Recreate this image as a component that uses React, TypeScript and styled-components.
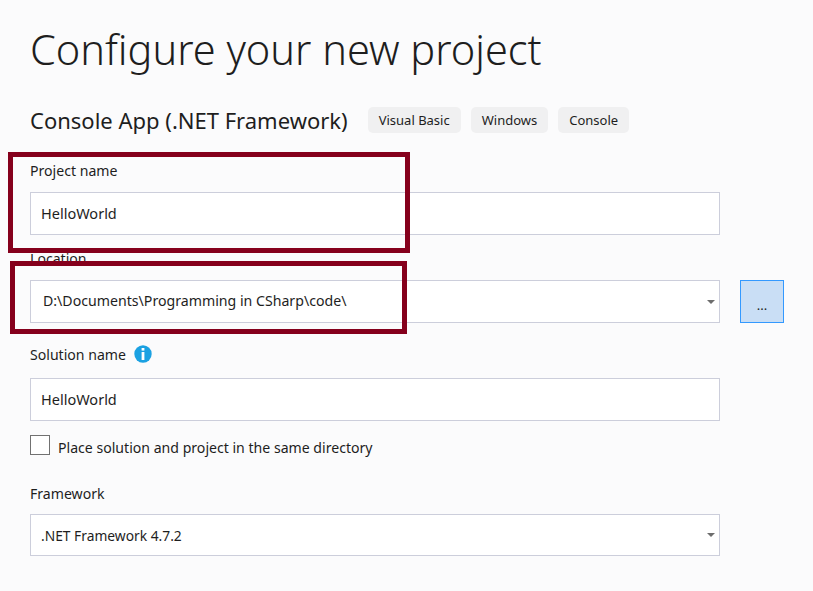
import React from "react";
import styled, { createGlobalStyle } from "styled-components";

const Global = createGlobalStyle`
  html, body { margin: 0; padding: 0; background: #fbfbfc; }
  body { font-family: "Noto Sans", "Open Sans", sans-serif; color: #1e1e1e; }
`;
const Page = styled.div`
  position: relative; width: 813px; height: 591px; overflow: hidden;
  padding: 0 0 0 30px; box-sizing: border-box; background: #fbfbfc;
`;
const Title = styled.h1`
  margin: 0; height: 96px; padding-top: 21px; box-sizing: border-box;
  font-size: 41.5px; line-height: 56px; font-weight: 300; color: #1e1e1e; white-space: nowrap;
`;
const Header = styled.div`
  display: flex; align-items: center; height: 47px; margin-bottom: 17px;
`;
const Subtitle = styled.h2`
  margin: 0 20px 0 0; font-size: 22px; line-height: 30px; font-weight: 400; color: #1e1e1e; white-space: nowrap;
`;
const Tags = styled.div`display: flex; gap: 10px;`;
const Tag = styled.span`
  display: flex; align-items: center; height: 26px; padding: 0 11px; border-radius: 5px;
  background: #f0f0f1; font-size: 13px; color: #1e1e1e; white-space: nowrap;
`;
const Label = styled.div`
  display: flex; align-items: center; gap: 8px; height: 20px; font-size: 14.1px; color: #1e1e1e;
`;
const Field = styled.div<{ $after: number }>`
  margin-bottom: ${p => p.$after}px;
`;
const Row = styled.div<{ $gap?: number }>`display: flex; gap: 20px; margin-top: ${p => p.$gap ?? 12}px;`;
const Input = styled.div<{ $inset?: number; $h?: number; $size?: number; $pad?: number }>`
  position: relative; display: flex; align-items: center; box-sizing: border-box;
  width: 690px; height: ${p => p.$h ?? 43}px; padding: 0 0 ${p => p.$pad ?? 2}px ${p => p.$inset ?? 10}px;
  background: #fff; border: 1px solid #cccedb; font-size: ${p => p.$size ?? 14.5}px; color: #1e1e1e; white-space: nowrap;
`;
const Caret = styled.span`
  position: absolute; right: 4px; top: 50%; margin-top: -2px; width: 0; height: 0;
  border-left: 4px solid transparent; border-right: 4px solid transparent; border-top: 4px solid #6d6d6d;
`;
const BrowseButton = styled.button`
  width: 44px; height: 43px; padding: 7px 0 0; box-sizing: border-box;
  background: #c9def5; border: 1px solid #3399ff; border-radius: 0;
  font-family: inherit; font-size: 13px; color: #1e1e1e;
`;
const CheckRow = styled.div`display: flex; align-items: center; gap: 8px; height: 20px;`;
const Checkbox = styled.span`
  display: block; box-sizing: border-box; width: 20px; height: 20px; background: #fff; border: 1px solid #717171;
`;
const CheckText = styled.span`font-size: 14.1px; color: #1e1e1e; white-space: nowrap; position: relative; top: 2px;`;
const Highlight = styled.div<{ $x: number; $y: number; $w: number; $h: number }>`
  position: absolute; box-sizing: border-box; border: 5px solid #85001c;
  left: ${p => p.$x}px; top: ${p => p.$y}px; width: ${p => p.$w}px; height: ${p => p.$h}px;
`;
const Info = () => (
  <svg width="18" height="18" viewBox="0 0 18 18">
    <circle cx="9" cy="9" r="8.7" fill="#1ba1e2" />
    <rect x="7.6" y="3" width="2.8" height="2.6" fill="#fff" />
    <rect x="7.6" y="7" width="2.8" height="8" fill="#fff" />
  </svg>
);

export default function App() {
  return (
    <Page>
      <Global />
      <Title>Configure your new project</Title>
      <Header>
        <Subtitle>Console App (.NET Framework)</Subtitle>
        <Tags>
          <Tag>Visual Basic</Tag>
          <Tag>Windows</Tag>
          <Tag>Console</Tag>
        </Tags>
      </Header>
      <Field $after={13}>
        <Label>Project name</Label>
        <Row><Input>HelloWorld</Input></Row>
      </Field>
      <Field $after={21}>
        <Label>Location</Label>
        <Row>
          <Input $inset={12} $size={14.15}>D:\Documents\Programming in CSharp\code\<Caret /></Input>
          <BrowseButton>...</BrowseButton>
        </Row>
      </Field>
      <Field $after={14}>
        <Label>Solution name <Info /></Label>
        <Row $gap={14}><Input>HelloWorld</Input></Row>
      </Field>
      <Field $after={28}>
        <CheckRow>
          <Checkbox />
          <CheckText>Place solution and project in the same directory</CheckText>
        </CheckRow>
      </Field>
      <Field $after={0}>
        <Label>Framework</Label>
        <Row $gap={11}><Input $h={42} $size={13.8} $pad={0}>.NET Framework 4.7.2<Caret /></Input></Row>
      </Field>
      <Highlight $x={8} $y={152} $w={402} $h={101} />
      <Highlight $x={10} $y={261} $w={397} $h={73} />
    </Page>
  );
}
